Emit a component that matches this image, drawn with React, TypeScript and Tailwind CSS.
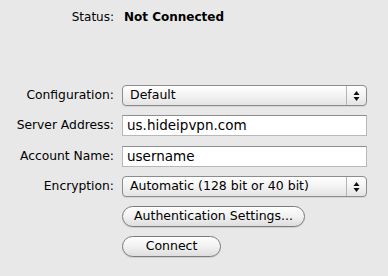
import React from "react";

const font = { fontFamily: '"DejaVu Sans", "Lucida Grande", sans-serif' };

function Arrows() {
  return (
    <svg width="7" height="12" viewBox="0 0 7 12" className="block">
      <path d="M3.5 1 L6.5 5 L0.5 5 Z" fill="#111" />
      <path d="M3.5 11 L6.5 7 L0.5 7 Z" fill="#111" />
    </svg>
  );
}

function Select({ value }: { value: string }) {
  return (
    <div className="flex h-[21px] items-stretch rounded-[4px] border border-[#8c8c8c] bg-gradient-to-b from-[#ffffff] via-[#f3f3f3] to-[#e4e4e4] shadow-[0_1px_0_rgba(0,0,0,0.08)]">
      <div className="flex flex-1 items-center pl-[7px] text-[12.5px] text-black">{value}</div>
      <div className="flex w-[20px] items-center justify-center border-l border-[#b5b5b5]">
        <Arrows />
      </div>
    </div>
  );
}

function Field({ value }: { value: string }) {
  return (
    <div className="flex h-[21px] items-center border border-[#b8b8b8] border-t-[#8e8e8e] bg-white pl-[4px] text-[13.5px] text-black">
      {value}
    </div>
  );
}

function Button({ label, w }: { label: string; w: string }) {
  return (
    <div
      className={`flex h-[21px] ${w} items-center justify-center rounded-full border border-[#7b7b7b] bg-gradient-to-b from-[#ffffff] via-[#f1f1f1] to-[#dedede] text-[12.5px] text-black shadow-[0_1px_0_rgba(0,0,0,0.1)]`}
    >
      {label}
    </div>
  );
}

function Row({ label, children, mt }: { label?: string; children: React.ReactNode; mt: string }) {
  return (
    <div className={`grid grid-cols-[114px_1fr] gap-x-[8px] pr-[21px] ${mt}`}>
      <div className="flex h-[21px] items-center justify-end text-[12.3px] text-black">{label}</div>
      {children}
    </div>
  );
}

export default function App() {
  return (
    <div className="h-[276px] w-[388px] bg-[#e8e8e8]" style={font}>
      <div className="grid grid-cols-[114px_1fr] gap-x-[8px] pr-[21px] pt-[6px]">
        <div className="flex h-[21px] items-center justify-end text-[12px] text-black">Status:</div>
        <div className="flex h-[21px] items-center pl-[2px] text-[12px] font-bold text-black">Not Connected</div>
      </div>
      <Row label="Configuration:" mt="mt-[58px]">
        <Select value="Default" />
      </Row>
      <Row label="Server Address:" mt="mt-[9px]">
        <Field value="us.hideipvpn.com" />
      </Row>
      <Row label="Account Name:" mt="mt-[10px]">
        <Field value="username" />
      </Row>
      <Row label="Encryption:" mt="mt-[9px]">
        <Select value="Automatic (128 bit or 40 bit)" />
      </Row>
      <Row mt="mt-[9px]">
        <Button label="Authentication Settings..." w="w-[183px]" />
      </Row>
      <Row mt="mt-[9px]">
        <Button label="Connect" w="w-[99px]" />
      </Row>
    </div>
  );
}
